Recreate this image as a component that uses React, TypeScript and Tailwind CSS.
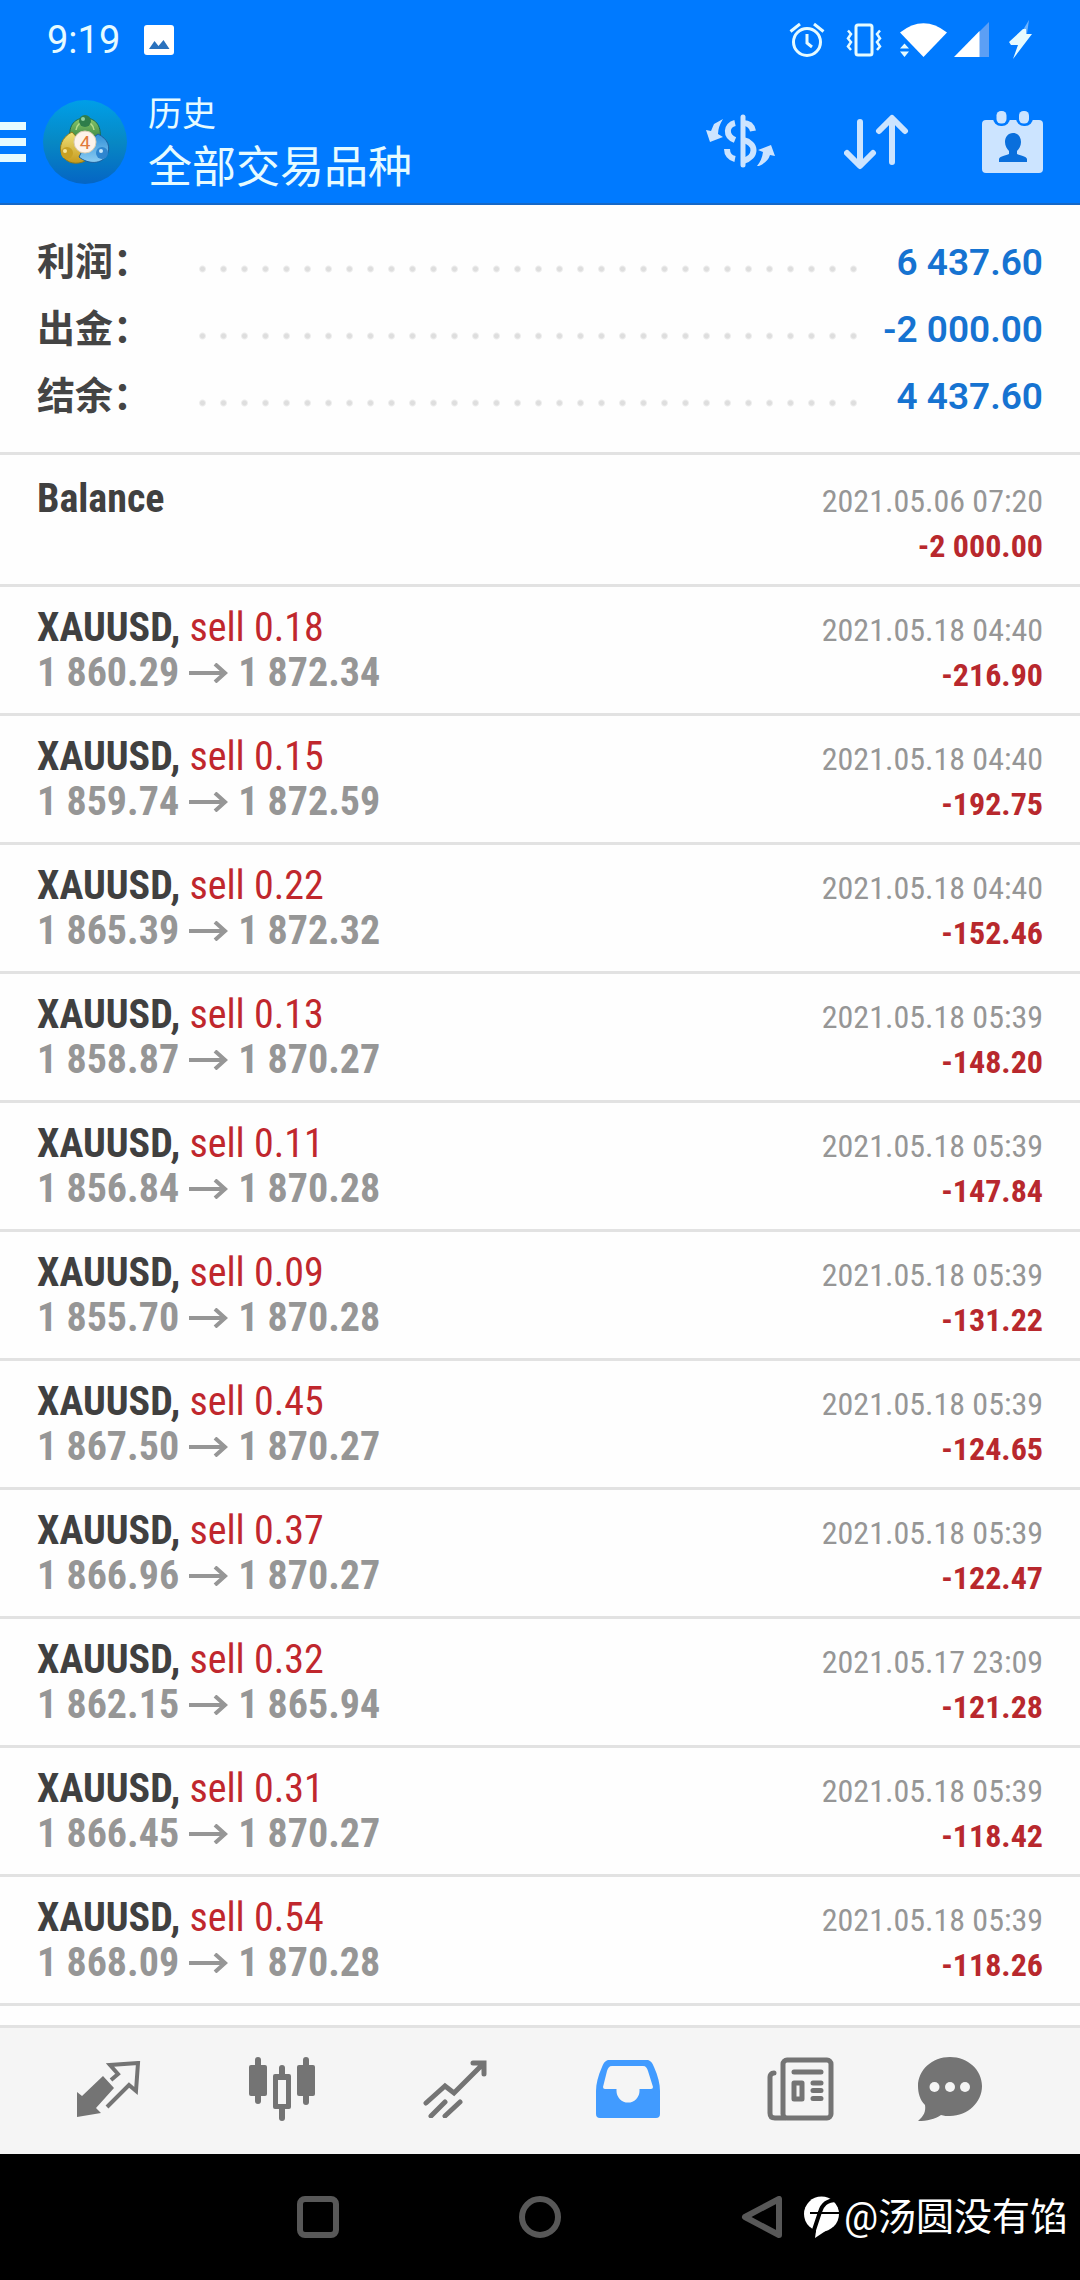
import type { ReactNode } from "react";

type Deal = {
  symbol: string;
  volume?: string;
  open?: string;
  close?: string;
  time: string;
  profit: string;
};

const summary = [
  { label: "利润：", value: "6 437.60" },
  { label: "出金：", value: "-2 000.00" },
  { label: "结余：", value: "4 437.60" },
];

const deals: Deal[] = [
  { symbol: "Balance", time: "2021.05.06 07:20", profit: "-2 000.00" },
  { symbol: "XAUUSD", volume: "0.18", open: "1 860.29", close: "1 872.34", time: "2021.05.18 04:40", profit: "-216.90" },
  { symbol: "XAUUSD", volume: "0.15", open: "1 859.74", close: "1 872.59", time: "2021.05.18 04:40", profit: "-192.75" },
  { symbol: "XAUUSD", volume: "0.22", open: "1 865.39", close: "1 872.32", time: "2021.05.18 04:40", profit: "-152.46" },
  { symbol: "XAUUSD", volume: "0.13", open: "1 858.87", close: "1 870.27", time: "2021.05.18 05:39", profit: "-148.20" },
  { symbol: "XAUUSD", volume: "0.11", open: "1 856.84", close: "1 870.28", time: "2021.05.18 05:39", profit: "-147.84" },
  { symbol: "XAUUSD", volume: "0.09", open: "1 855.70", close: "1 870.28", time: "2021.05.18 05:39", profit: "-131.22" },
  { symbol: "XAUUSD", volume: "0.45", open: "1 867.50", close: "1 870.27", time: "2021.05.18 05:39", profit: "-124.65" },
  { symbol: "XAUUSD", volume: "0.37", open: "1 866.96", close: "1 870.27", time: "2021.05.18 05:39", profit: "-122.47" },
  { symbol: "XAUUSD", volume: "0.32", open: "1 862.15", close: "1 865.94", time: "2021.05.17 23:09", profit: "-121.28" },
  { symbol: "XAUUSD", volume: "0.31", open: "1 866.45", close: "1 870.27", time: "2021.05.18 05:39", profit: "-118.42" },
  { symbol: "XAUUSD", volume: "0.54", open: "1 868.09", close: "1 870.28", time: "2021.05.18 05:39", profit: "-118.26" },
];

function StatusBar() {
  return (
    <div className="flex h-20 items-center justify-between pl-[47px] pr-12 text-[#e6fbff]">
      <div className="flex items-center gap-6">
        <span className="text-[38px] leading-none">9:19</span>
        <svg className="w-[30px] h-[30px]" viewBox="0 0 30 30">
          <rect width="30" height="30" rx="3" fill="#fff" />
          <path d="M5 24 10.5 16l4 5 5-6 6 9z" fill="#2a72bd" />
        </svg>
      </div>
      <div className="flex items-center">
        <svg className="w-9 h-9 mr-[21px]" viewBox="0 0 36 36" fill="none" stroke="currentColor" strokeWidth="3">
          <circle cx="18" cy="20" r="13.5" />
          <path d="M18 12v9l5 4M1.5 9.5 11 2M34.5 9.5 25 2" />
        </svg>
        <svg className="w-9 h-9 mr-[18px]" viewBox="0 0 36 36" fill="none" stroke="currentColor" strokeWidth="3">
          <rect x="10" y="3" width="16" height="30" rx="2" />
          <path d="M2 8.5 5 12 2 16.5 5 20 2 24.5 5 28M34 8.5 31 12 34 16.5 31 20 34 24.5 31 28" strokeWidth="2.5" />
        </svg>
        <svg className="w-[47px] h-9 mr-[7px]" viewBox="0 0 47 36">
          <path d="M0 10.5Q23.5 -8 47 10.5L23.5 35z" fill="#fff" />
          <path d="M-2 28 4.500 19 11.5 27.5V30L6 36H-2z" fill="#007aff" />
          <path d="M0 26.5 4.5 21.5 9 26.5zM0 29.5H9L4.5 35z" fill="#e6fbff" />
        </svg>
        <svg className="w-[35px] h-9 mr-5" viewBox="0 0 35 36">
          <path d="M25 10 35 0V35H25z" fill="#5c9ff5" />
          <path d="M0 35 25.5 9V35z" fill="#fff" />
        </svg>
        <svg className="w-[23px] h-10" viewBox="0 0 23 40">
          <path d="M20 0 14 10 12 20H17z" fill="#6fb4ff" />
          <path d="M14 9 0 22 2 25h7L4 39 23 14H17V9z" fill="#e6fbff" />
        </svg>
      </div>
    </div>
  );
}

function AppLogo() {
  return (
    <svg className="w-[86px] h-[86px]" viewBox="0 0 86 86">
      <defs>
        <linearGradient id="disc" x1="0" y1="0" x2="0" y2="1">
          <stop offset="0" stopColor="#009fe8" />
          <stop offset="0.5" stopColor="#0788c4" />
          <stop offset="1" stopColor="#0565c4" />
        </linearGradient>
        <linearGradient id="green" x1="0" y1="0" x2="0" y2="1">
          <stop offset="0" stopColor="#8bc86a" />
          <stop offset="1" stopColor="#2f7f3f" />
        </linearGradient>
        <linearGradient id="gold" x1="0" y1="0" x2="0" y2="1">
          <stop offset="0" stopColor="#efe27a" />
          <stop offset="1" stopColor="#c79a1c" />
        </linearGradient>
        <linearGradient id="sky" x1="0" y1="0" x2="0" y2="1">
          <stop offset="0" stopColor="#2f8fd8" />
          <stop offset="1" stopColor="#8ccdf2" />
        </linearGradient>
      </defs>
      <circle cx="43" cy="43" r="42" fill="url(#disc)" />
      <path d="M28 40C26 25 34 19 43 19s17 6 15 21L43 42z" fill="url(#green)" stroke="#1e6b4a" />
      <path d="M30 33C20 38 16 48 20 56c5 9 15 10 23 6L40 44z" fill="url(#gold)" stroke="#8a7a1c" />
      <path d="M56 35c10 5 13 13 9 21-5 9-18 10-28 2l7-14z" fill="url(#sky)" stroke="#1b5f9e" />
      <path d="M34 31C35 25 39 23 43 23s8 2 9 8" fill="none" stroke="#b5dc8c" strokeWidth="1.5" />
      <circle cx="43" cy="22" r="6" fill="#2e7d4a" />
      <circle cx="41" cy="20" r="2" fill="#8fd0a0" />
      <circle cx="25" cy="54" r="6" fill="#c8a124" />
      <circle cx="23" cy="52" r="2" fill="#f6e69a" />
      <circle cx="60" cy="54" r="6" fill="#2f86cf" />
      <circle cx="59" cy="52" r="2" fill="#c6e8fb" />
      <circle cx="43" cy="43" r="11" fill="#fdf3ea" stroke="#d9cdb5" />
      <text x="43" y="50" textAnchor="middle" fontSize="19" fill="#e07a3a">4</text>
    </svg>
  );
}

function Toolbar() {
  return (
    <div className="flex h-[125px] items-center border-b-2 border-[#1668c7] pr-[37px] text-[#cce4ff]">
      <button type="button" aria-label="Menu" className="mr-4 flex flex-col gap-2">
        <span className="h-2 w-[26px] bg-[#e6fbff]" />
        <span className="h-2 w-[26px] bg-[#e6fbff]" />
        <span className="h-2 w-[26px] bg-[#e6fbff]" />
      </button>
      <AppLogo />
      <h1 className="ml-5 flex-1 text-[#e6fbff]">
        <span className="block text-[34px] leading-[52px]">历史</span>
        <span className="block text-[44px] leading-[56px]">全部交易品种</span>
      </h1>
      <button type="button" aria-label="Currency" className="mr-[69px]">
        <svg className="w-[69px] h-14" viewBox="0 0 69 56" fill="none" stroke="currentColor" strokeWidth="6">
          <path d="M37 3v48" strokeWidth="5" strokeLinecap="round" />
          <path d="M29 9C20 11 19 22 29 26M21 35c0 5 3 9 8 10" />
          <path d="M37 9c6 0 9 3 10 8M37 26c14 3 14 17 0 21" />
          <path d="M17 5 8 10 5 17 0 16 4 28 17 23 12 20Q12 13 17 5zM51 52Q56 46 57 38L52 36 65 31 69 42 64 41Q62 48 53 52z" fill="currentColor" stroke="none" />
        </svg>
      </button>
      <button type="button" aria-label="Sort" className="mr-[73px]">
        <svg className="w-[65px] h-14" viewBox="0 0 65 56" fill="none" stroke="currentColor" strokeWidth="6" strokeLinecap="round" strokeLinejoin="round">
          <path d="M16 8v43M3 39 16 52 29 39M48 48V5M35 17 48 4 61 17" />
        </svg>
      </button>
      <button type="button" aria-label="Period">
        <svg className="w-[61px] h-[62px]" viewBox="0 0 61 62">
          <rect y="9" width="61" height="53" rx="4" fill="currentColor" />
          <rect x="11" y="-3" width="17" height="18" rx="8" fill="#007aff" />
          <rect x="34" y="-3" width="17" height="18" rx="8" fill="#007aff" />
          <rect x="14.5" y="0" width="10" height="12.5" rx="4.5" fill="currentColor" />
          <rect x="37" y="0" width="10" height="12.5" rx="4.5" fill="currentColor" />
          <path d="M31 22c5 0 8 4 8 9 0 4-2 7-4 9v3c5 2 9 2 10 5v3H17v-3c1-3 5-3 10-5v-3c-2-2-4-5-4-9 0-5 3-9 8-9z" fill="#0a6fdc" />
        </svg>
      </button>
    </div>
  );
}

function Summary() {
  return (
    <dl className="border-b-[3px] border-[#e2e2e2] px-[37px] pt-6 pb-[22px]">
      {summary.map(row => (
        <div key={row.label} className="flex h-[67px] items-center">
          <dt className="w-[155px] text-[38px] font-bold leading-[67px] text-[#444444]">{row.label}</dt>
          <dd className="flex flex-1 items-center">
            <span className="mt-3 h-2 flex-1 bg-[radial-gradient(circle,#dedede_2px,transparent_4px)] bg-[size:21px_8px] bg-repeat-x" />
            <span className="w-[179px] text-right text-[37px] font-semibold text-[#1673d1]">{row.value}</span>
          </dd>
        </div>
      ))}
    </dl>
  );
}

function DealRow({ deal }: { deal: Deal }) {
  return (
    <li className="flex h-[129px] items-baseline justify-between border-b-[3px] border-[#e2e2e2] px-[37px] pt-[18px] font-['Roboto_Condensed',Roboto,sans-serif] leading-[45px]">
      <div className="text-[40px]">
        <div className="font-bold text-[#404040]">
          {deal.symbol}
          {deal.volume && <>, <span className="font-normal text-[#c0272d]">sell {deal.volume}</span></>}
        </div>
        {deal.open && (
          <div className="flex items-center font-bold text-[#969696]">
            {deal.open}
            <svg className="mx-[10px] w-[39px] h-5" viewBox="0 0 39 20" fill="none" stroke="currentColor" strokeWidth="4">
              <path d="M0 10h36M26 1l10 9-10 9" />
            </svg>
            {deal.close}
          </div>
        )}
      </div>
      <div className="text-right text-[32px]">
        <time className="block text-[#969696]">{deal.time}</time>
        <div className="font-bold text-[#b8282d]">{deal.profit}</div>
      </div>
    </li>
  );
}

function TabButton({ label, active, children }: { label: string; active?: boolean; children: ReactNode }) {
  return (
    <button
      type="button"
      aria-label={label}
      className={"flex items-center justify-center " + (active ? "text-[#419bff]" : "text-[#747474]")}
    >
      {children}
    </button>
  );
}

function TabBar() {
  return (
    <nav className="grid h-[129px] grid-cols-[repeat(5,173fr)_126fr] border-t-[3px] border-[#e2e2e2] bg-[#f5f5f5] pl-[22px] pr-[67px] pb-1">
      <TabButton label="Quotes">
        <svg className="w-16 h-14" viewBox="0 0 64 56">
          <path d="M0 31 5 35 26 15 37 27 19 47 24 52 0 56z" fill="currentColor" />
          <path d="M34 19 41 13 33 4 61 2 59 30 52 24 30 46" fill="none" stroke="currentColor" strokeWidth="4" />
        </svg>
      </TabButton>
      <TabButton label="Charts">
        <svg className="w-[66px] h-16" viewBox="0 0 66 64" fill="currentColor">
          <rect y="8" width="18" height="31" rx="2" />
          <rect x="6" y="0" width="6" height="47" rx="3" />
          <rect x="48" y="8" width="18" height="31" rx="2" />
          <rect x="54" y="0" width="6" height="48" rx="3" />
          <path d="M26 17h14a2 2 0 0 1 2 2v31a2 2 0 0 1-2 2H26a2 2 0 0 1-2-2V19a2 2 0 0 1 2-2zM29 23v24h8V23z" fillRule="evenodd" />
          <rect x="30" y="8" width="6" height="12" rx="3" />
          <rect x="30" y="49" width="6" height="15" rx="3" />
        </svg>
      </TabButton>
      <TabButton label="Trade">
        <svg className="w-16 h-[58px]" viewBox="0 0 64 58" fill="none" stroke="currentColor" strokeWidth="5" strokeLinecap="round">
          <path d="M3 43 22 26 31 33 60 4M50 3h11v11M8 56 22 42M22 56 37 42" />
        </svg>
      </TabButton>
      <TabButton label="History" active>
        <svg className="w-16 h-[58px]" viewBox="0 0 64 58">
          <path
            d="M13 0H51C54 0 56 2 58 7 62 16 64 24 64 31V54a4 4 0 0 1-4 4H4a4 4 0 0 1-4-4V31C0 24 2 16 6 7 8 2 10 0 13 0zM16 6C13 6 12 8 11 11L7 27Q7 29 9 29H20.5V31a11.5 11.5 0 0 0 23 0V29H55Q57 29 57 27L52 11C51 8 50 6 47 6z"
            fill="currentColor"
            fillRule="evenodd"
          />
        </svg>
      </TabButton>
      <TabButton label="News">
        <svg className="w-[67px] h-16" viewBox="0 0 67 64" fill="none" stroke="currentColor" strokeWidth="5" strokeLinecap="round">
          <rect x="16" y="3" width="48" height="58" rx="4" />
          <path d="M7 16C4 16 3 18 3 20V56C3 60 5 61 8 61H18M27 15H54M46 26H54M46 33.5H54M46 41.5H54" />
          <rect x="27" y="26" width="8" height="16" strokeLinejoin="round" />
        </svg>
      </TabButton>
      <TabButton label="Messages">
        <svg className="w-16 h-16" viewBox="0 0 64 64">
          <path d="M32 0C50 0 64 13 64 29S50 59 32 59C29 59 26 59 23 58 17 62 9 64 0 64 6 59 8 54 7 48 2 43 0 36 0 29 0 13 14 0 32 0z" fill="currentColor" />
          <circle cx="16.5" cy="30" r="5" fill="#f5f5f5" />
          <circle cx="32" cy="30" r="5" fill="#f5f5f5" />
          <circle cx="47" cy="30" r="5" fill="#f5f5f5" />
        </svg>
      </TabButton>
    </nav>
  );
}

function SystemBar() {
  return (
    <div className="relative flex h-[126px] items-center justify-center gap-[180px] bg-black text-[#585858]">
      <button type="button" aria-label="Recents">
        <svg className="w-[42px] h-[42px]" viewBox="0 0 42 42" fill="none" stroke="currentColor" strokeWidth="6">
          <rect x="3" y="3" width="36" height="36" rx="5" />
        </svg>
      </button>
      <button type="button" aria-label="Home">
        <svg className="w-[42px] h-[42px]" viewBox="0 0 42 42" fill="none" stroke="currentColor" strokeWidth="6">
          <circle cx="21" cy="21" r="18" />
        </svg>
      </button>
      <button type="button" aria-label="Back">
        <svg className="w-[42px] h-[42px]" viewBox="0 0 42 42" fill="none" stroke="currentColor" strokeWidth="6" strokeLinejoin="round">
          <path d="M38 3V39L4 21z" />
        </svg>
      </button>
      <div className="absolute inset-y-0 right-3 flex items-center gap-1 text-[38px] text-white">
        <svg className="w-9 h-[43px]" viewBox="0 0 36 43">
          <circle cx="17.5" cy="18" r="17.5" fill="#fff" />
          <path d="M13 28 11 42 23 34z" fill="#fff" />
          <path d="M33 4C22 4 18 9 16 16L9 37" fill="none" stroke="#000" strokeWidth="4" />
          <path d="M6 17H36" stroke="#000" strokeWidth="2" />
        </svg>
        <span>@汤圆没有馅</span>
      </div>
    </div>
  );
}

export default function App() {
  return (
    <div className="flex min-h-screen flex-col bg-[#fefefe] font-[Roboto,'Noto_Sans_CJK_SC',sans-serif]">
      <header className="bg-[#007aff]">
        <StatusBar />
        <Toolbar />
      </header>
      <main className="flex-1">
        <Summary />
        <ul className="pt-[3px] pb-[19px]">
          {deals.map((deal, i) => (
            <DealRow key={i} deal={deal} />
          ))}
        </ul>
      </main>
      <TabBar />
      <SystemBar />
    </div>
  );
}
